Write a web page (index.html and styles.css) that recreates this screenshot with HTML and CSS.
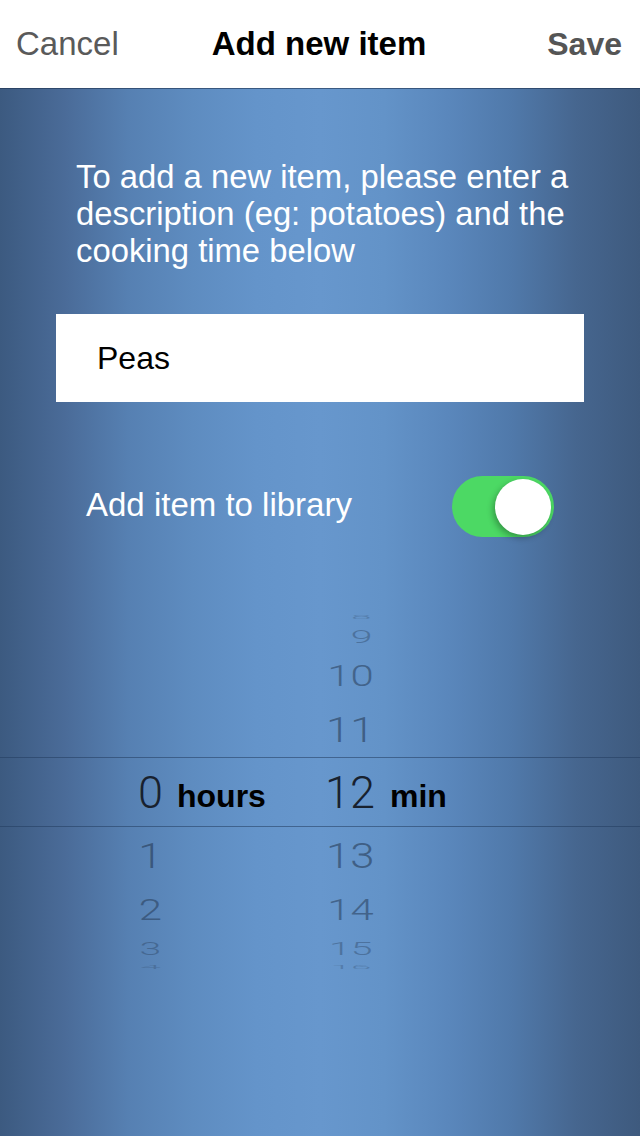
FILE: index.html
```html
<!DOCTYPE html>
<html lang="en">
<head>
<meta charset="utf-8">
<title>Add new item</title>
<link rel="stylesheet" href="styles.css">
</head>
<body>
<div class="screen">
  <header class="navbar">
    <span class="nav-btn cancel">Cancel</span>
    <span class="nav-title">Add new item</span>
    <span class="nav-btn save">Save</span>
  </header>
  <main class="content">
    <p class="intro">To add a new item, please enter a description (eg: potatoes) and the cooking time below</p>
    <div class="field">Peas</div>
    <div class="toggle-row">
      <span class="toggle-label">Add item to library</span>
      <span class="switch on"><span class="knob"></span></span>
    </div>
    <div class="picker">
      <div class="prow r4"><span class="hnum"></span><span class="hlab"></span><span class="mnum">8</span><span class="mlab"></span></div>
      <div class="prow r3"><span class="hnum"></span><span class="hlab"></span><span class="mnum">9</span><span class="mlab"></span></div>
      <div class="prow r2"><span class="hnum"></span><span class="hlab"></span><span class="mnum">10</span><span class="mlab"></span></div>
      <div class="prow r1"><span class="hnum"></span><span class="hlab"></span><span class="mnum">11</span><span class="mlab"></span></div>
      <div class="prow sel"><span class="hnum">0</span><span class="hlab">hours</span><span class="mnum">12</span><span class="mlab">min</span></div>
      <div class="prow r1"><span class="hnum">1</span><span class="hlab"></span><span class="mnum">13</span><span class="mlab"></span></div>
      <div class="prow r2"><span class="hnum">2</span><span class="hlab"></span><span class="mnum">14</span><span class="mlab"></span></div>
      <div class="prow r3"><span class="hnum">3</span><span class="hlab"></span><span class="mnum">15</span><span class="mlab"></span></div>
      <div class="prow r4"><span class="hnum">4</span><span class="hlab"></span><span class="mnum">16</span><span class="mlab"></span></div>
    </div>
  </main>
</div>
</body>
</html>
```
FILE: styles.css
```css
html, body {
  margin: 0;
  padding: 0;
}
body {
  font-family: "Liberation Sans", Arial, sans-serif;
  width: 640px;
  height: 1136px;
  overflow: hidden;
}
.screen {
  width: 640px;
  height: 1136px;
  display: flex;
  flex-direction: column;
}
.navbar {
  height: 88px;
  flex: none;
  background: #ffffff;
  display: grid;
  grid-template-columns: 1fr auto 1fr;
  align-items: center;
  padding: 0 18px 0 16px;
  box-sizing: border-box;
  box-shadow: 0 1px 0 rgba(30, 50, 80, 0.6);
  position: relative;
  z-index: 1;
}
.nav-btn {
  font-size: 33px;
  color: #5a5a5a;
}
.nav-btn.save {
  justify-self: end;
  font-weight: bold;
  color: #555555;
  font-size: 32px;
}
.nav-title {
  font-size: 33px;
  font-weight: bold;
  color: #000;
}
.content {
  flex: 1;
  background: linear-gradient(to right,
    #3c5a80 0%,
    #4a6b98 10%,
    #5680b2 20%,
    #5e8cc0 30%,
    #6494ca 40%,
    #6797cd 50%,
    #6393c8 60%,
    #5a87bc 70%,
    #5079aa 80%,
    #46668f 90%,
    #3e5a7e 100%);
  display: flex;
  flex-direction: column;
}
.intro {
  margin: 70px 50px 0 76px;
  font-size: 32.8px;
  line-height: 37px;
  color: #ffffff;
}
.field {
  margin: 45px 56px 0 56px;
  height: 88px;
  background: #ffffff;
  display: flex;
  align-items: center;
  padding-left: 41px;
  font-size: 32px;
  color: #000;
}
.toggle-row {
  margin-top: 74px;
  display: flex;
  align-items: center;
  justify-content: space-between;
  padding: 0 86px 0 86px;
}
.toggle-label {
  font-size: 33px;
  color: #ffffff;
  margin-top: -3px;
}
.switch {
  width: 102px;
  height: 61px;
  border-radius: 31px;
  background: #4cd964;
  display: flex;
  align-items: center;
  justify-content: flex-end;
  padding-right: 3px;
  box-sizing: border-box;
}
.knob {
  width: 56px;
  height: 56px;
  border-radius: 50%;
  background: #ffffff;
  box-shadow: -2px 3px 6px rgba(0, 0, 0, 0.3);
}
.picker {
  margin-top: 74px;
  display: flex;
  flex-direction: column;
}
.prow {
  display: flex;
  align-items: center;
  padding-left: 138px;
  font-family: Roboto, "Liberation Sans", sans-serif;
  font-weight: 300;
  white-space: nowrap;
}
.hnum {
  width: 30px;
  font-size: 45px;
  line-height: 1;
  color: #22344d;
}
.hlab {
  width: 157px;
  padding-left: 9px;
  padding-top: 9px;
  box-sizing: border-box;
  font-family: "Liberation Sans", Arial, sans-serif;
  font-weight: bold;
  font-size: 32px;
  color: #000;
}
.mnum {
  width: 50px;
  text-align: right;
  font-size: 45px;
  line-height: 1;
  color: #22344d;
}
.mlab {
  padding-left: 15px;
  padding-top: 9px;
  font-family: "Liberation Sans", Arial, sans-serif;
  font-weight: bold;
  font-size: 32px;
  color: #000;
}
.prow.sel {
  height: 70px;
  border-top: 1px solid rgba(35, 60, 95, 0.55);
  border-bottom: 1px solid rgba(35, 60, 95, 0.55);
  box-sizing: border-box;
}
.prow.sel .hnum,
.prow.sel .mnum {
  color: #18212e;
}
.prow.r1 { height: 56px; }
.prow.r2 { height: 52px; }
.prow.r3 { height: 26px; }
.prow.r4 { height: 12px; }
.prow.r1 .hnum, .prow.r1 .mnum {
  transform: scale(0.97, 0.8);
  opacity: 0.55;
}
.prow.r2 .hnum, .prow.r2 .mnum {
  transform: scale(0.93, 0.67);
  opacity: 0.5;
}
.prow.r3 .hnum, .prow.r3 .mnum {
  transform: scale(0.87, 0.4);
  opacity: 0.35;
}
.prow.r4 .hnum, .prow.r4 .mnum {
  transform: scale(0.82, 0.12);
  opacity: 0.25;
}
.prow .hnum { transform-origin: 40% 50%; }
.prow .mnum { transform-origin: 60% 50%; }
```
